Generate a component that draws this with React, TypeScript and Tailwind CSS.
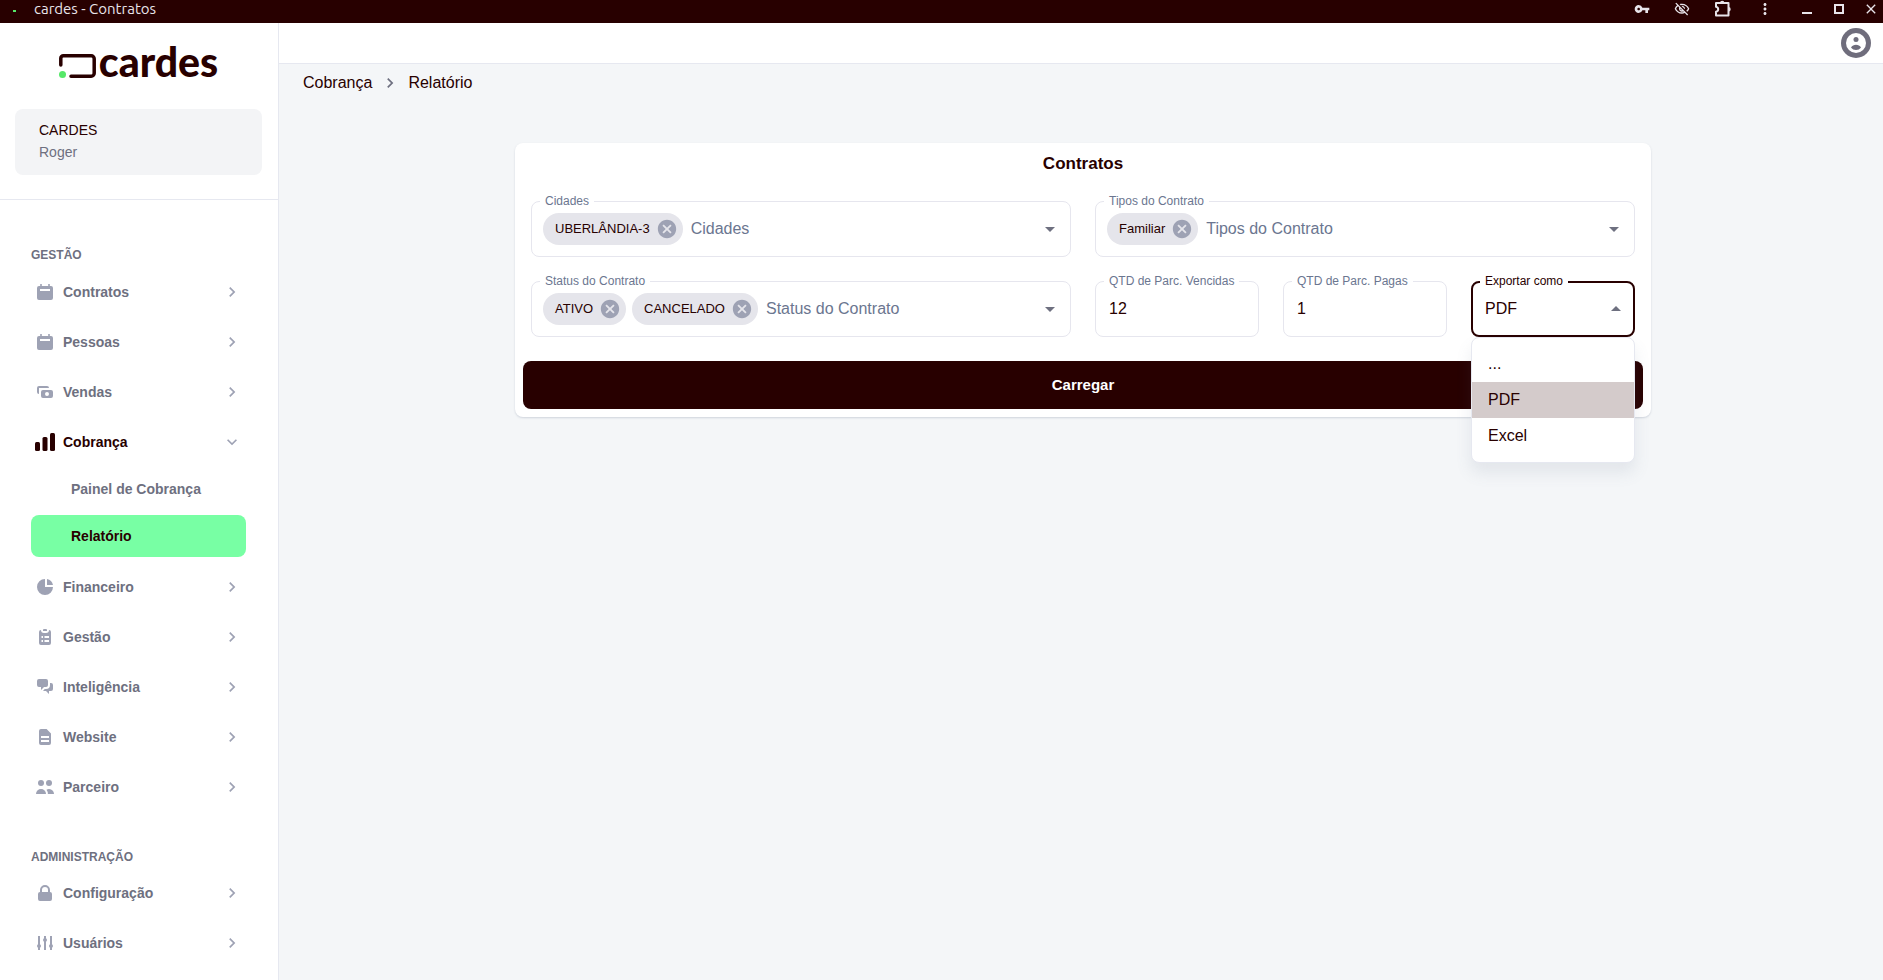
import React, { useState } from 'react';
import {
  MdArrowDropDown,
  MdArrowDropUp,
  MdCancel,
  MdChevronRight,
  MdClose,
  MdExpandMore,
  MdMoreVert,
  MdOutlineVisibilityOff,
  MdVpnKey,
} from 'react-icons/md';

interface IconProps {
  children: React.ReactNode;
}

// Solid 16px menu glyph
function Glyph({ children }: IconProps) {
  return (
    <svg viewBox="0 0 16 16" className="w-4 h-4 overflow-visible" fill="currentColor" aria-hidden="true">
      {children}
    </svg>
  );
}

const calendarIcon = (
  <Glyph>
    <path
      fillRule="evenodd"
      d="M3.2 0h1.6v2h6.4V0h1.6v2H14a2 2 0 0 1 2 2v10a2 2 0 0 1-2 2H2a2 2 0 0 1-2-2V4a2 2 0 0 1 2-2h1.200zM3 5v2h10V5z"
    />
  </Glyph>
);

const cashIcon = (
  <Glyph>
    <path d="M2 2h8a2 2 0 0 1 2 2H2v6a2 2 0 0 1-2-2V4a2 2 0 0 1 2-2z" />
    <path
      fillRule="evenodd"
      d="M6 6h8a2 2 0 0 1 2 2v4a2 2 0 0 1-2 2H6a2 2 0 0 1-2-2V8a2 2 0 0 1 2-2zm4 6a2 2 0 1 0 0-4 2 2 0 0 0 0 4z"
    />
  </Glyph>
);

const barsIcon = (
  <svg viewBox="0 0 20 18" className="w-5 h-[18px] shrink-0" fill="currentColor" aria-hidden="true">
    <rect x="0" y="9" width="5" height="9" rx="1.500" />
    <rect x="7.500" y="4" width="5" height="14" rx="1.500" />
    <rect x="15" y="0" width="5" height="18" rx="1.500" />
  </svg>
);

const pieIcon = (
  <Glyph>
    <path d="M10 0a8 8 0 0 1 6 6h-6z" />
    <path d="M8 0v8h8a8 8 0 1 1-8-8z" />
  </Glyph>
);

const clipboardIcon = (
  <Glyph>
    <path d="M7 0h2a1 1 0 0 1 1 1v1H6V1a1 1 0 0 1 1-1z" />
    <path
      fillRule="evenodd"
      d="M2 3a2 2 0 0 1 2-2 3 3 0 0 0 3 3h2a3 3 0 0 0 3-3 2 2 0 0 1 2 2v11a2 2 0 0 1-2 2H4a2 2 0 0 1-2-2zM4.500 7v2H6V7zm3 0v2H12V7zm-3 4v2H6v-2zm3 0v2H12v-2z"
    />
  </Glyph>
);

const chatIcon = (
  <Glyph>
    <path d="M0 2a2 2 0 0 1 2-2h7a2 2 0 0 1 2 2v4a2 2 0 0 1-2 2H7l-3 3V8H2a2 2 0 0 1-2-2z" />
    <path d="M13 4v2a4 4 0 0 1-4 4H7.800l-1.700 1.700c.3.200.6.300.9.300h2l3 3v-3h2a2 2 0 0 0 2-2V6a2 2 0 0 0-2-2z" />
  </Glyph>
);

const documentIcon = (
  <Glyph>
    <path
      fillRule="evenodd"
      d="M2 2a2 2 0 0 1 2-2h5.600L14 4.400V14a2 2 0 0 1-2 2H4a2 2 0 0 1-2-2zm2 5v2h8V7zm0 4v2h8v-2z"
    />
  </Glyph>
);

const usersIcon = (
  <Glyph>
    <circle cx="4" cy="4" r="3" />
    <circle cx="12" cy="4" r="3" />
    <path d="M-1 15a5 5 0 0 1 10 0z" />
    <path d="M10.900 15H17a5 5 0 0 0-7.500-4.300A7 7 0 0 1 10.900 15z" />
  </Glyph>
);

const lockIcon = (
  <Glyph>
    <path
      fillRule="evenodd"
      d="M3 7V5a5 5 0 0 1 10 0v2a2 2 0 0 1 2 2v5a2 2 0 0 1-2 2H3a2 2 0 0 1-2-2V9a2 2 0 0 1 2-2zm8 0V5a3 3 0 0 0-6 0v2z"
    />
  </Glyph>
);

const slidersIcon = (
  <Glyph>
    <path d="M1 1h2v8.300a2 2 0 0 1 0 3.400V15H1v-2.300a2 2 0 0 1 0-3.400zM7 1h2v2.300a2 2 0 0 1 0 3.400V15H7V6.700a2 2 0 0 1 0-3.400zM13 1h2v8.300a2 2 0 0 1 0 3.400V15h-2v-2.300a2 2 0 0 1 0-3.400z" />
  </Glyph>
);

interface NavEntry {
  label: string;
  icon: React.ReactNode;
  open?: boolean;
}

const topItems: NavEntry[] = [
  { label: 'Contratos', icon: calendarIcon },
  { label: 'Pessoas', icon: calendarIcon },
  { label: 'Vendas', icon: cashIcon },
  { label: 'Cobrança', icon: barsIcon, open: true },
];

const bottomItems: NavEntry[] = [
  { label: 'Financeiro', icon: pieIcon },
  { label: 'Gestão', icon: clipboardIcon },
  { label: 'Inteligência', icon: chatIcon },
  { label: 'Website', icon: documentIcon },
  { label: 'Parceiro', icon: usersIcon },
];

const adminItems: NavEntry[] = [
  { label: 'Configuração', icon: lockIcon },
  { label: 'Usuários', icon: slidersIcon },
];

function NavItem({ label, icon, open }: NavEntry) {
  return (
    <button
      type="button"
      aria-expanded={!!open}
      className={`flex items-center w-full h-[50px] px-1 text-sm font-bold text-left cursor-pointer ${
        open ? 'text-[#280000]' : 'text-[#6e7080]'
      }`}
    >
      <span className={`flex justify-center w-5 mr-2 ${open ? '' : 'text-[#9ea2b4]'}`}>{icon}</span>
      <span className="grow">{label}</span>
      {open ? <MdExpandMore size={20} className="text-[#9ea2b4]" /> : <MdChevronRight size={20} className="text-[#9ea2b4]" />}
    </button>
  );
}

function TitleBar() {
  return (
    <header className="flex items-center h-[23px] pb-[5px] px-[7px] shrink-0 bg-[#280000] text-[#e8e4ea]">
      <span className="w-[3px] h-[2px] ml-[6px] mt-1 bg-[#55e868]" />
      <span className="ml-[18px] grow text-[15px] leading-[18px] font-['Ubuntu','Noto_Sans',sans-serif]">cardes - Contratos</span>
      <div className="flex items-center gap-6">
        <button type="button" aria-label="Senhas"><MdVpnKey size={16} /></button>
        <button type="button" aria-label="Conteúdo oculto"><MdOutlineVisibilityOff size={16} /></button>
        <button type="button" aria-label="Extensões">
          <svg viewBox="0 0 18 18" className="w-[18px] h-[18px]" fill="none" aria-hidden="true">
            <path
              d="M2 3h12.500v12.500H2v-3.800c1.400-.3 2.200-1.200 2.200-2.450S3.400 7.100 2 6.800z"
              stroke="currentColor"
              strokeWidth="2"
              strokeLinejoin="round"
            />
            <path d="M6 3a2.200 2.200 0 0 1 4.400 0zM14.500 7a2.200 2.200 0 0 1 0 4.400z" fill="currentColor" />
          </svg>
        </button>
        <button type="button" aria-label="Mais"><MdMoreVert size={18} /></button>
      </div>
      <div className="flex items-center gap-[22px] ml-7">
        <button type="button" aria-label="Minimizar" className="w-[10px] h-[10px] border-b-2 border-current" />
        <button type="button" aria-label="Maximizar" className="w-[10px] h-[10px] border-2 border-current" />
        <button type="button" aria-label="Fechar" className="w-[10px] flex justify-center"><MdClose size={16} className="shrink-0" /></button>
      </div>
    </header>
  );
}

function Logo() {
  return (
    <div className="flex items-end justify-center h-8 text-[#280000]">
      <svg viewBox="0 0 37 24" className="w-[37px] h-6 shrink-0" fill="none" aria-hidden="true">
        <path
          d="M1.800 11V4.300a2.500 2.500 0 0 1 2.500-2.500h27.900a3 3 0 0 1 3 3v14.400a3 3 0 0 1-3 3H12"
          stroke="currentColor"
          strokeWidth="3.500"
          strokeLinecap="round"
        />
        <circle cx="3.500" cy="20.500" r="3.500" fill="#55e868" />
      </svg>
      <span className="ml-[3px] text-[41px] leading-8 font-black font-['Lato',sans-serif]">cardes</span>
    </div>
  );
}

function Sidebar() {
  return (
    <aside className="flex flex-col w-[279px] shrink-0 border-r border-[#e6e8f0] bg-white">
      <div className="pt-[23px] pl-[15px] pr-4 pb-6 border-b border-[#e6e8f0]">
        <Logo />
        <div className="flex flex-col justify-center h-[66px] mt-[31px] px-6 pb-[2px] rounded-lg bg-[#f3f4f6] text-sm leading-[22px]">
          <span className="text-[#280000]">CARDES</span>
          <span className="text-[#6e7080]">Roger</span>
        </div>
      </div>
      <nav className="flex flex-col pl-[31px] pr-8 pt-11">
        <h2 className="mb-px text-xs leading-[22px] font-bold text-[#6e7080]">GESTÃO</h2>
        {topItems.map((item) => (
          <NavItem key={item.label} {...item} />
        ))}
        <div className="flex flex-col gap-[5px] pt-px pb-[5px]">
          <a href="#painel" className="flex items-center h-[42px] pl-10 rounded-lg text-sm font-bold text-[#6e7080]">
            Painel de Cobrança
          </a>
          <a href="#relatorio" className="flex items-center h-[42px] pl-10 rounded-lg text-sm font-bold text-[#280000] bg-[#78ffa4]">
            Relatório
          </a>
        </div>
        {bottomItems.map((item) => (
          <NavItem key={item.label} {...item} />
        ))}
        <h2 className="mt-[34px] text-xs leading-[22px] font-bold text-[#6e7080]">ADMINISTRAÇÃO</h2>
        {adminItems.map((item) => (
          <NavItem key={item.label} {...item} />
        ))}
      </nav>
    </aside>
  );
}

interface FieldProps {
  id: string;
  label: string;
  focused?: boolean;
  children: React.ReactNode;
}

// Outlined field with its label sitting on the top border
function Field({ id, label, focused, children }: FieldProps) {
  return (
    <div
      className={`relative flex items-center h-14 min-w-0 rounded-lg ${
        focused ? 'border-2 border-[#280000]' : 'border border-[#e6e6ee]'
      }`}
    >
      <label
        htmlFor={id}
        className={`absolute px-[5px] bg-white text-xs leading-4 whitespace-nowrap ${
          focused ? '-top-[10px] left-[7px] text-[#280000]' : '-top-[9px] left-2 text-[#6b7690]'
        }`}
      >
        {label}
      </label>
      {children}
    </div>
  );
}

interface TagFieldProps {
  id: string;
  label: string;
  initial: string[];
}

function TagField({ id, label, initial }: TagFieldProps) {
  const [tags, setTags] = useState(initial);

  return (
    <Field id={id} label={label}>
      <div className="flex items-center gap-[6px] grow min-w-0 pl-[11px] pr-2">
        {tags.map((tag) => (
          <span key={tag} className="flex items-center h-8 pl-3 pr-[5px] gap-[6px] rounded-full bg-[#e5e5eb] text-[13px] text-[#280000] whitespace-nowrap">
            {tag}
            <button
              type="button"
              aria-label={`Remover ${tag}`}
              onClick={() => setTags(tags.filter((t) => t !== tag))}
              className="text-[#9ea2b4] cursor-pointer"
            >
              <MdCancel size={22} />
            </button>
          </span>
        ))}
        <input
          id={id}
          placeholder={label}
          className="grow min-w-0 pl-[2px] text-base text-[#280000] placeholder:text-[#6b7690] outline-none"
        />
        <MdArrowDropDown size={24} className="shrink-0 text-[#6e7080]" />
      </div>
    </Field>
  );
}

const exportOptions = ['...', 'PDF', 'Excel'];

function ReportForm() {
  const [overdue, setOverdue] = useState('12');
  const [paid, setPaid] = useState('1');
  const [format, setFormat] = useState('PDF');

  return (
    <form
      onSubmit={(e) => e.preventDefault()}
      className="w-full max-w-[1136px] p-2 rounded-lg bg-white text-[#280000] shadow-[0_1px_2px_rgba(100,116,139,0.25)]"
    >
      <h1 className="text-[17px] leading-[26px] font-bold text-center">Contratos</h1>
      <div className="grid grid-cols-2 gap-6 px-2 py-6">
        <TagField id="cidades" label="Cidades" initial={['UBERLÂNDIA-3']} />
        <TagField id="tipos" label="Tipos do Contrato" initial={['Familiar']} />
        <TagField id="status" label="Status do Contrato" initial={['ATIVO', 'CANCELADO']} />
        <div className="grid grid-cols-3 gap-6">
          <Field id="vencidas" label="QTD de Parc. Vencidas">
            <input
              id="vencidas"
              value={overdue}
              onChange={(e) => setOverdue(e.target.value)}
              className="w-full px-[13px] outline-none"
            />
          </Field>
          <Field id="pagas" label="QTD de Parc. Pagas">
            <input
              id="pagas"
              value={paid}
              onChange={(e) => setPaid(e.target.value)}
              className="w-full px-[13px] outline-none"
            />
          </Field>
          <Field id="exportar" label="Exportar como" focused>
            <select
              id="exportar"
              value={format}
              onChange={(e) => setFormat(e.target.value)}
              className="grow min-w-0 pl-3 appearance-none outline-none"
            >
              {exportOptions.map((option) => (
                <option key={option}>{option}</option>
              ))}
            </select>
            <MdArrowDropUp size={24} className="shrink-0 mr-[5px] text-[#6e7080]" />
            <ul
              role="listbox"
              className="absolute top-full mt-[2px] -inset-x-[2px] z-10 py-2 rounded-lg border border-[#e6e8f0] bg-white shadow-[0_10px_16px_rgba(100,116,139,0.12)]"
            >
              {exportOptions.map((option) => (
                <li
                  key={option}
                  role="option"
                  aria-selected={option === format}
                  onClick={() => setFormat(option)}
                  className={`px-4 leading-9 cursor-pointer ${option === format ? 'bg-[#d4cbcb]' : ''}`}
                >
                  {option}
                </li>
              ))}
            </ul>
          </Field>
        </div>
      </div>
      <button type="submit" className="block w-full h-12 rounded-lg bg-[#280000] text-white text-[15px] font-bold cursor-pointer">
        Carregar
      </button>
    </form>
  );
}

export default function App() {
  return (
    <div className="flex flex-col h-screen overflow-hidden font-['Liberation_Sans',Arial,sans-serif]">
      <TitleBar />
      <div className="flex grow min-h-0">
        <Sidebar />
        <div className="flex flex-col grow min-w-0 bg-[#f4f6f8]">
          <div className="flex items-center justify-end h-[41px] pr-3 shrink-0 border-b border-[#e6e8f0] bg-white">
            <button type="button" aria-label="Conta" className="cursor-pointer">
              <svg viewBox="0 0 30 30" className="w-[30px] h-[30px]" aria-hidden="true">
                <circle cx="15" cy="15" r="15" fill="#6f6d7c" />
                <circle cx="15" cy="15" r="10" fill="#fff" />
                <circle cx="15" cy="11.500" r="2.500" fill="#6f6d7c" />
                <path d="M10 19.500c1-2 3-2.800 5-2.800s4 .8 5 2.800c-1.200 1.700-3 2.500-5 2.500s-3.800-.8-5-2.500z" fill="#6f6d7c" />
              </svg>
            </button>
          </div>
          <main className="flex flex-col px-6">
            <nav className="flex items-center h-[38px] text-base text-[#280000]" aria-label="Trilha">
              <a href="#cobranca">Cobrança</a>
              <MdChevronRight size={20} className="mx-2 text-[#6e7080]" />
              <a href="#relatorio">Relatório</a>
            </nav>
            <div className="flex justify-center mt-[41px] pl-1">
              <ReportForm />
            </div>
          </main>
        </div>
      </div>
    </div>
  );
}
